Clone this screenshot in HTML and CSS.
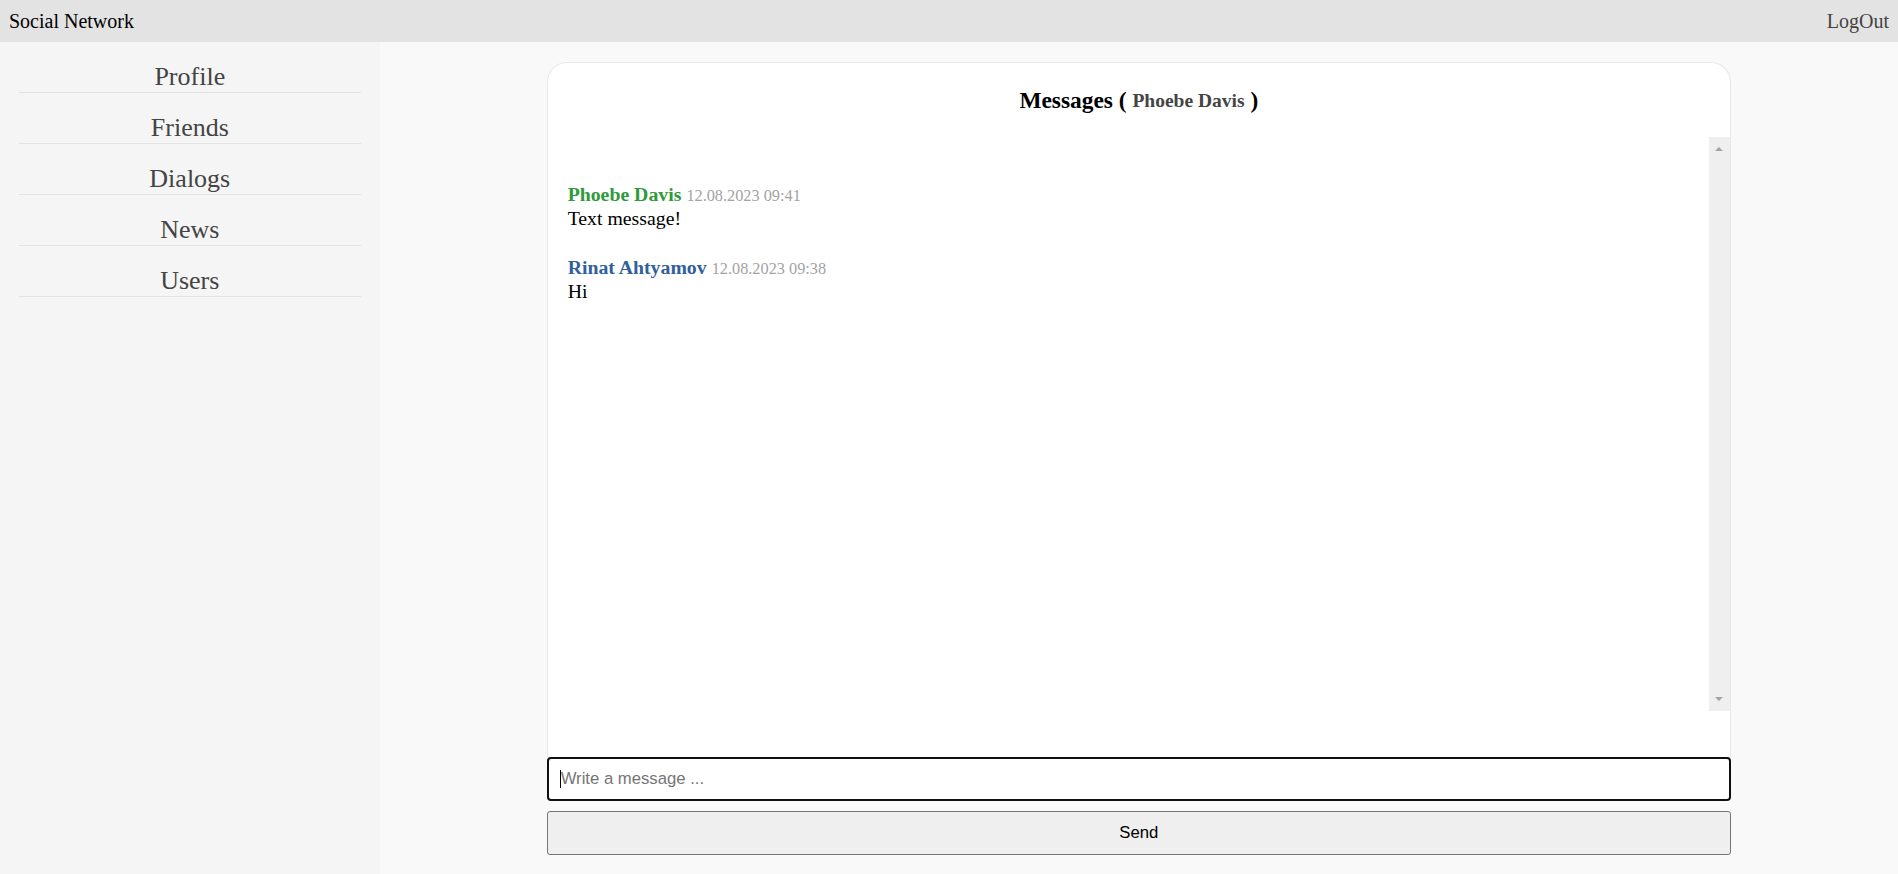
FILE: index.html
```html
<!DOCTYPE html>
<html lang="en">
<head>
<meta charset="utf-8">
<title>Social Network</title>
<link rel="stylesheet" href="styles.css">
</head>
<body>
<header class="topbar">
  <span class="brand">Social Network</span>
  <a class="logout" href="#">LogOut</a>
</header>
<div class="layout">
  <nav class="sidebar">
    <a class="nav-item" href="#">Profile</a>
    <a class="nav-item" href="#">Friends</a>
    <a class="nav-item" href="#">Dialogs</a>
    <a class="nav-item" href="#">News</a>
    <a class="nav-item" href="#">Users</a>
  </nav>
  <main class="main">
    <div class="chat">
      <section class="card">
        <h3 class="card-title">Messages ( <span class="card-title-name">Phoebe Davis</span> )</h3>
        <div class="scroll-area">
          <div class="message-list">
            <div class="message">
              <div class="message-head"><span class="author author-green">Phoebe Davis</span> <span class="date">12.08.2023 09:41</span></div>
              <div class="message-text">Text message!</div>
            </div>
            <div class="message">
              <div class="message-head"><span class="author author-blue">Rinat Ahtyamov</span> <span class="date">12.08.2023 09:38</span></div>
              <div class="message-text">Hi</div>
            </div>
          </div>
          <div class="scrollbar" aria-hidden="true">
            <span class="arrow arrow-up"></span>
            <span class="arrow arrow-down"></span>
          </div>
        </div>
      </section>
      <form class="send-form">
        <input class="msg-input" type="text" placeholder="Write a message ...">
        <button class="send-btn" type="button">Send</button>
      </form>
    </div>
  </main>
</div>
</body>
</html>
```
FILE: styles.css
```css
html, body {
  margin: 0;
  padding: 0;
  height: 100%;
}
body {
  font-family: "Liberation Serif", "Times New Roman", serif;
  font-size: 20px;
  color: #000;
  display: flex;
  flex-direction: column;
  overflow: hidden;
}
.topbar {
  height: 42px;
  flex: 0 0 42px;
  background: #e3e3e3;
  display: flex;
  align-items: center;
  justify-content: space-between;
  padding: 0 9px;
  box-sizing: border-box;
}
.brand {
  font-size: 20px;
  color: #000;
}
.logout {
  font-size: 20px;
  color: #444;
  text-decoration: none;
}
.layout {
  flex: 1;
  display: flex;
  min-height: 0;
}
.sidebar {
  width: 20%;
  flex: 0 0 20%;
  background: #f5f5f5;
  padding: 0 19px;
  box-sizing: border-box;
  display: flex;
  flex-direction: column;
}
.nav-item {
  display: block;
  padding-top: 20px;
  line-height: 30px;
  font-size: 26px;
  text-align: center;
  color: #444;
  text-decoration: none;
  border-bottom: 1px solid #e3e3e3;
}
.main {
  flex: 1;
  background: #f9f9f9;
  display: flex;
  justify-content: center;
}
.chat {
  width: 78%;
  margin-top: 20px;
  display: flex;
  flex-direction: column;
}
.card {
  height: 695px;
  box-sizing: border-box;
  background: #fff;
  border: 1px solid #e8e8e8;
  border-bottom: none;
  border-radius: 20px 20px 0 0;
  display: flex;
  flex-direction: column;
  padding-bottom: 46px;
}
.card-title {
  margin: 0;
  height: 74px;
  flex: 0 0 74px;
  display: flex;
  align-items: center;
  justify-content: center;
  white-space: pre;
  font-size: 23.4px;
  font-weight: bold;
  color: #000;
}
.card-title-name {
  font-size: 19.5px;
  color: #444;
  position: relative;
  top: 1px;
}
.scroll-area {
  flex: 1;
  display: flex;
  min-height: 0;
}
.message-list {
  flex: 1;
  overflow: hidden;
  padding: 46px 20px 0;
  display: flex;
  flex-direction: column;
  gap: 26px;
}
.message-head,
.message-text {
  line-height: 23px;
}
.author {
  font-weight: bold;
  font-size: 19.8px;
}
.author-green {
  color: #2f9a3c;
}
.author-blue {
  color: #31609c;
}
.date {
  font-size: 16.3px;
  color: #a3a3a3;
}
.message-text {
  font-size: 19.8px;
}
.scrollbar {
  width: 21px;
  flex: 0 0 21px;
  background: #efefef;
  display: flex;
  flex-direction: column;
  justify-content: space-between;
  align-items: center;
  padding: 10px 0;
  box-sizing: border-box;
}
.arrow {
  width: 0;
  height: 0;
  border-left: 4.5px solid transparent;
  border-right: 4.5px solid transparent;
}
.arrow-up {
  border-bottom: 4.5px solid #a3a3a3;
}
.arrow-down {
  border-top: 4.5px solid #a3a3a3;
}
.send-form {
  display: flex;
  flex-direction: column;
  gap: 10px;
  margin: 0;
}
.msg-input {
  height: 44px;
  box-sizing: border-box;
  margin: 0;
  padding: 0 12px;
  border: 2px solid #101010;
  border-radius: 4px;
  font-family: "Liberation Sans", Arial, sans-serif;
  font-size: 16.7px;
  color: #000;
  background: #fff linear-gradient(#000, #000) no-repeat 11px center / 1px 18px;
  outline: none;
}
.msg-input::placeholder {
  color: #757575;
}
.send-btn {
  height: 44px;
  margin: 0;
  box-sizing: border-box;
  border: 1px solid #767676;
  border-radius: 3px;
  background: #efefef;
  font-family: "Liberation Sans", Arial, sans-serif;
  font-size: 16.7px;
  color: #000;
}
```
